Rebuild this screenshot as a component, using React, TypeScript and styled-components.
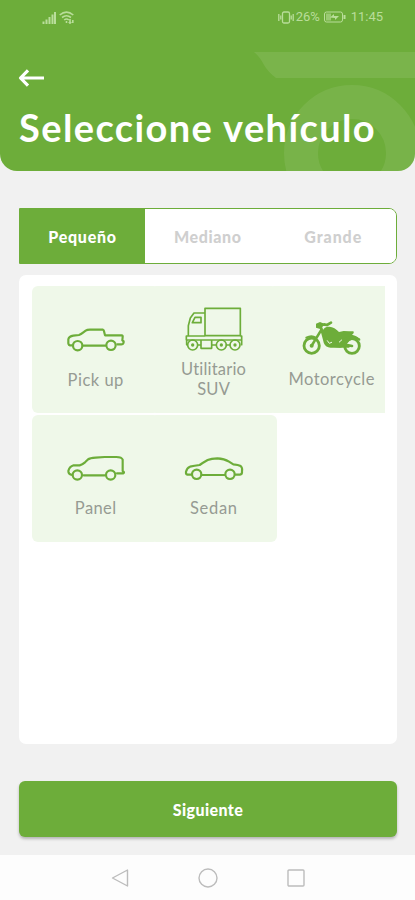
import React from 'react';
import styled, { createGlobalStyle } from 'styled-components';

const GREEN = '#6dad3a';

const GlobalStyle = createGlobalStyle`
  * { box-sizing: border-box; }
  body { margin: 0; background: #f1f1f1; }
  button { border: 0; padding: 0; background: none; font: inherit; color: inherit; }
  svg { display: block; flex: none; }
`;

const Screen = styled.div`
  width: 415px;
  height: 900px;
  display: flex;
  flex-direction: column;
  overflow: hidden;
  background: #f1f1f1;
  font-family: Lato, sans-serif;
`;

const Header = styled.header`
  position: relative;
  height: 171px;
  flex: none;
  border-radius: 0 0 17px 17px;
  background: ${GREEN};
  overflow: hidden;
  color: #fff;
`;

const HeaderArt = styled.svg`
  position: absolute;
  right: 0;
  top: 0;
`;

const HeaderContent = styled.div`
  position: relative;
  height: 100%;
  display: flex;
  flex-direction: column;
`;

const StatusBar = styled.div`
  height: 34px;
  padding: 0 32px 0 42px;
  display: flex;
  align-items: center;
  color: #b9dd9a;
  font: 13px/34px Roboto, sans-serif;
`;

const Signals = styled.div`
  display: flex;
  gap: 3px;
  margin-right: auto;
`;

const StatusText = styled.span<{ $track: number; $gap: number }>`
  letter-spacing: ${(p) => p.$track}px;
  margin-left: ${(p) => p.$gap}px;
  white-space: nowrap;
`;

const BackButton = styled.button`
  margin: 34px 0 0 18px;
  width: 28px;
  height: 20px;
`;

const Title = styled.h1`
  margin: 15px 0 0 19px;
  font-size: 38px;
  font-weight: 700;
  line-height: 48px;
  letter-spacing: 1.4px;
  white-space: nowrap;
`;

const Main = styled.main`
  flex: 1;
  display: flex;
  flex-direction: column;
  padding: 37px 18px 18px 19px;
`;

const Tabs = styled.div`
  display: grid;
  grid-template-columns: 125px 1fr 1fr;
  height: 56px;
  flex: none;
  border: 1px solid ${GREEN};
  border-radius: 0 8px 8px 0;
  background: #fff;
  overflow: hidden;
`;

const Tab = styled.button<{ $active?: boolean; $track: number }>`
  background: ${(p) => (p.$active ? GREEN : '#fff')};
  color: ${(p) => (p.$active ? '#fff' : '#cfcfcf')};
  font-size: 16px;
  font-weight: 900;
  letter-spacing: ${(p) => p.$track}px;
`;

const Panel = styled.section`
  margin-top: 11px;
  height: 469px;
  flex: none;
  border-radius: 7px;
  background: #fff;
  padding: 11px 12px 0 13px;
`;

const CardRow = styled.div`
  display: flex;
  height: 129px;
  overflow: hidden;
`;

const Card = styled.button<{ $top: number; $gap: number }>`
  width: 127px;
  height: 127px;
  flex: none;
  margin-right: -9px;
  border-radius: 6px;
  background: #eff8e9;
  display: flex;
  flex-direction: column;
  align-items: center;
  padding-top: ${(p) => p.$top}px;
  gap: ${(p) => p.$gap}px;
`;

const CardLabel = styled.span<{ $track: number }>`
  color: #969b93;
  font-size: 16.5px;
  line-height: 20px;
  letter-spacing: ${(p) => p.$track}px;
  margin-right: -${(p) => p.$track}px;
  text-align: center;
  white-space: pre-line;
`;

const NextButton = styled.button`
  margin-top: 37px;
  height: 56px;
  flex: none;
  border-radius: 6px;
  background: ${GREEN};
  box-shadow: 0 2px 3px rgba(0, 0, 0, 0.25);
  color: #fff;
  font-size: 16px;
  font-weight: 900;
  letter-spacing: 0.4px;
`;

const NavBar = styled.nav`
  height: 45px;
  flex: none;
  background: #fdfdfd;
  display: flex;
  justify-content: center;
  align-items: center;
  gap: 68px;
`;

const CarSvg = styled.svg`
  fill: none;
  stroke: ${GREEN};
  stroke-width: 6.5;
  stroke-linejoin: round;
  stroke-linecap: round;
`;

const TruckSvg = styled(CarSvg)`
  stroke-width: 5;
`;

const PickupIcon = () => (
  <CarSvg width="60" height="26" viewBox="47 51 180 78">
    <path d="M66 106H58Q53 104 54 95V88Q56 79 69 77L86 75Q92 73 98 68L106 62Q110 59 119 59H158Q161 60 161 64L164 76H214Q218 76 217 81L216 91Q222 94 219 100Q218 103 213 103H201M98 107H165" />
    <circle cx="82" cy="107" r="14" />
    <circle cx="182" cy="106" r="14" />
  </CarSvg>
);

const PanelIcon = () => (
  <CarSvg width="60" height="26" viewBox="137 151 180 78">
    <path d="M156 211Q144 209 144 199Q147 186 160 182H178Q186 180 194 173L202 165Q209 160 226 159L253 157H288Q304 157 307 165V199Q314 203 309 206H290M190 212H253" />
    <circle cx="171" cy="211" r="14" />
    <circle cx="271" cy="211" r="14" />
  </CarSvg>
);

const SedanIcon = () => (
  <CarSvg width="60" height="26" viewBox="72 149 180 78">
    <path d="M95 208H82Q77 207 78 199Q81 187 90 184Q103 181 119 179Q129 172 143 164Q154 159 172 159Q193 160 207 169L220 177Q235 178 242 182Q248 187 246 198Q247 207 240 208H227M125 209H194" />
    <circle cx="110" cy="207" r="14" />
    <circle cx="210" cy="207" r="14" />
  </CarSvg>
);

const TruckIcon = () => (
  <TruckSvg width="60" height="46" viewBox="58 32 180 138">
    <path d="M121 39H227V121H121ZM121 53H88L77 68L71 91V122H121M83 82L91 66H109V82ZM227 122H231V134H65V122H71M109 136V159H141V136M66 134V148M231 134V148M99 149H109M141 149H154M185 149H195" />
    <circle cx="84" cy="149" r="15" />
    <circle cx="170" cy="149" r="15" />
    <circle cx="211" cy="149" r="15" />
    <g fill={GREEN} stroke="none">
      <circle cx="84" cy="149" r="5" />
      <circle cx="170" cy="149" r="5" />
      <circle cx="211" cy="149" r="5" />
    </g>
  </TruckSvg>
);

const MotorcycleIcon = () => (
  <svg width="60" height="36" viewBox="67 61 180 108" fill="none" stroke={GREEN} strokeLinecap="round">
    <circle cx="96" cy="138" r="23" strokeWidth="8.5" />
    <circle cx="217" cy="139" r="22" strokeWidth="8.5" />
    <path d="M96 138L126 89L119 78M122 76L134 74L142 76L154 69M126 90L136 128Q141 139 153 140H207" strokeWidth="8" />
    <path d="M109 72L121 67L130 71L129 83L119 87L109 84ZM129 93Q134 80 149 81Q165 82 178 97L192 94Q210 95 221 95Q225 100 217 105Q237 109 242 123Q223 114 210 123L195 140L181 144L145 140L136 126Z" fill={GREEN} stroke="none" />
    <path d="M80 114Q96 105 108 114M194 119Q216 103 239 119" strokeWidth="6" />
    <path d="M143 123L149 131L156 128M186 121L179 127" stroke="#eff8e9" strokeWidth="3" />
    <circle cx="96" cy="138" r="6" fill={GREEN} stroke="none" />
    <path d="M192 134L217 139" strokeWidth="8" />
  </svg>
);

export default function App() {
  return (
    <Screen>
      <GlobalStyle />
      <Header>
        <HeaderArt width="170" height="171" viewBox="245 0 170 171">
          <path d="M254 52H415V78H276Q268 72 264 65Q260 57 254 52Z" fill="#fff" opacity="0.09" />
          <circle cx="352" cy="153" r="51" fill="none" stroke="#fff" strokeWidth="34" opacity="0.08" />
        </HeaderArt>
        <HeaderContent>
          <StatusBar>
            <Signals>
              <svg width="14" height="13" viewBox="0 0 14 13" fill="none" stroke="currentColor" strokeWidth="2">
                <path d="M1.5 10.5V13M4.5 8.5V13M7.5 6V13M10.5 3.5V13M13 1V13" />
              </svg>
              <svg width="15" height="13" viewBox="0 0 15 13" fill="none" stroke="currentColor" strokeWidth="1.6">
                <path d="M.7 4Q7.5-1.8 14.3 4M3 6.5Q7.5 3 12 6.5M5.2 9Q7.5 7 9.8 9M7.5 10V12M11 8V12M9.8 11L11 12.2L12.3 11M13.8 12V9" />
              </svg>
            </Signals>
            <svg width="16" height="13" viewBox="0 0 16 13" fill="none" stroke="currentColor" strokeWidth="1.3">
              <rect x="4.5" y="1" width="7" height="11" rx="1.5" />
              <path d="M.8 3V10M2.8 4.5V8.5M13.2 4.5V8.5M15.2 3V10" />
            </svg>
            <StatusText $track={-0.1} $gap={2}>26%</StatusText>
            <svg width="27" height="12" viewBox="-4 0 27 12" fill="none" stroke="currentColor">
              <rect x=".5" y="1" width="18" height="10" rx="2" />
              <path d="M20.5 4V8" strokeWidth="2" />
              <rect x="2" y="2.5" width="5" height="7" fill="currentColor" stroke="none" opacity=".6" />
              <path d="M6 6.5L10 3V5H15L11 9V7Z" fill="currentColor" stroke="none" />
            </svg>
            <StatusText $track={0} $gap={4}>11:45</StatusText>
          </StatusBar>
          <BackButton aria-label="Volver">
            <svg width="28" height="20" viewBox="0 0 28 20" fill="none" stroke="#fff" strokeWidth="3.2" strokeLinejoin="round">
              <path d="M10 2.3L2.5 10L10 17.7M3 10H26" />
            </svg>
          </BackButton>
          <Title>Seleccione vehículo</Title>
        </HeaderContent>
      </Header>
      <Main>
        <Tabs>
          <Tab $active $track={0.75}>Pequeño</Tab>
          <Tab $track={0.6}>Mediano</Tab>
          <Tab $track={0.9}>Grande</Tab>
        </Tabs>
        <Panel>
          <CardRow>
            <Card $top={41} $gap={17}>
              <PickupIcon />
              <CardLabel $track={0.5}>Pick up</CardLabel>
            </Card>
            <Card $top={20} $gap={7}>
              <TruckIcon />
              <CardLabel $track={0.2}>{'Utilitario\nSUV'}</CardLabel>
            </Card>
            <Card $top={34} $gap={13}>
              <MotorcycleIcon />
              <CardLabel $track={0.45}>Motorcycle</CardLabel>
            </Card>
          </CardRow>
          <CardRow>
            <Card $top={40} $gap={17}>
              <PanelIcon />
              <CardLabel $track={0.4}>Panel</CardLabel>
            </Card>
            <Card $top={40} $gap={17}>
              <SedanIcon />
              <CardLabel $track={0.7}>Sedan</CardLabel>
            </Card>
          </CardRow>
        </Panel>
        <NextButton>Siguiente</NextButton>
      </Main>
      <NavBar>
        <svg width="20" height="20" viewBox="0 0 20 20" fill="none" stroke="#bcbcbc" strokeWidth="1.4" strokeLinejoin="round">
          <path d="M17.5 2V18L2.5 10Z" />
        </svg>
        <svg width="20" height="20" viewBox="0 0 20 20" fill="none" stroke="#bcbcbc" strokeWidth="1.4">
          <circle cx="10" cy="10" r="9" />
        </svg>
        <svg width="20" height="20" viewBox="0 0 20 20" fill="none" stroke="#bcbcbc" strokeWidth="1.4">
          <rect x="2" y="2" width="16" height="16" rx="1" />
        </svg>
      </NavBar>
    </Screen>
  );
}
